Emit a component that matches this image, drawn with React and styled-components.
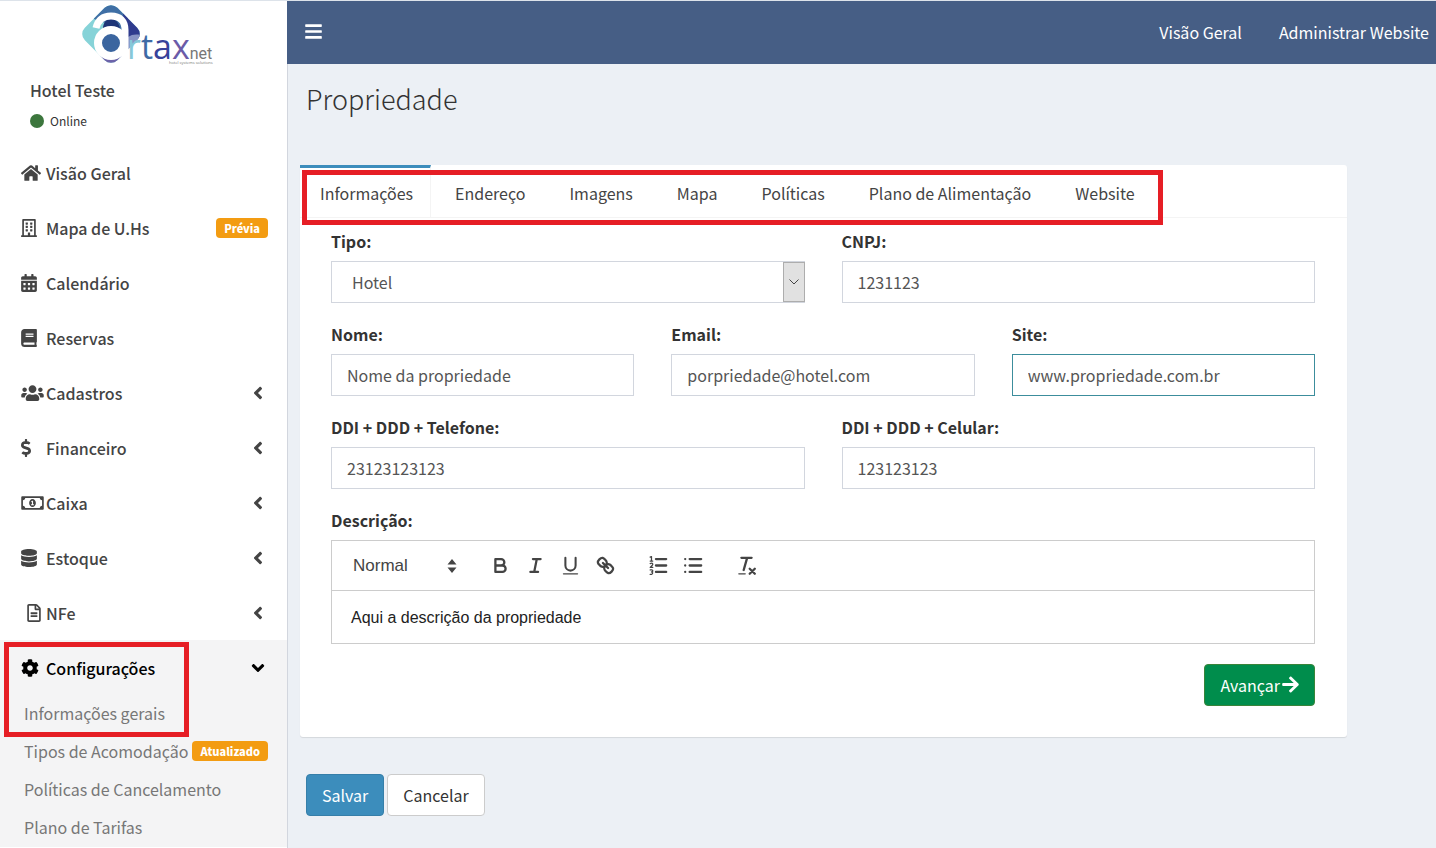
import styled, { createGlobalStyle, css } from "styled-components";
import {
  FaAngleDown,
  FaAngleLeft,
  FaArrowRight,
  FaBars,
  FaBook,
  FaCalendarAlt,
  FaCog,
  FaDatabase,
  FaDollarSign,
  FaHome,
  FaRegBuilding,
  FaRegFileAlt,
  FaRegMoneyBillAlt,
  FaUsers,
} from "react-icons/fa";

const GlobalStyle = createGlobalStyle`
  * {
    box-sizing: border-box;
  }
  body {
    margin: 0;
    background: #ecf0f5;
    color: #333;
    font-family: "Noto Sans CJK JP", "Open Sans", sans-serif;
    font-size: 16px;
    line-height: 24px;
  }
  button, input, select {
    font: inherit;
    color: inherit;
  }
  a {
    color: inherit;
    text-decoration: none;
  }
  ul {
    margin: 0;
    padding: 0;
    list-style: none;
  }
`;

const Page = styled.div`
  display: flex;
  height: 100vh;
  overflow: hidden;
  border-top: 1px solid #dde3ea;
`;

const Sidebar = styled.aside`
  flex: 0 0 287px;
  background: #fff;
  overflow: hidden;
`;

const LogoLink = styled.a`
  display: block;
  height: 64px;
  padding-left: 80px;
  svg {
    display: block;
    overflow: visible;
  }
`;

const UserPanel = styled.div`
  height: 80px;
  padding: 13px 30px;
`;

const UserName = styled.p`
  margin: 0 0 7px;
  font-weight: 500;
  color: #444;
`;

const Status = styled.a`
  display: flex;
  align-items: center;
  gap: 6px;
  font-size: 12px;
  &::before {
    content: "";
    width: 14px;
    height: 14px;
    border-radius: 50%;
    background: #3c763d;
  }
`;

const MenuItem = styled.li`
  position: relative;
  background: ${({ $active }) => ($active ? "#f4f4f5" : "transparent")};
`;

const MenuLink = styled.a`
  display: flex;
  align-items: center;
  height: 55px;
  padding: 0 19px 0 21px;
  font-weight: 500;
  color: ${({ $active }) => ($active ? "#000" : "#444")};
`;

const MenuIcon = styled.span`
  display: flex;
  flex: 0 0 25px;
  justify-content: ${({ $center }) => ($center ? "center" : "flex-start")};
  svg {
    flex: none;
    height: 18px;
    width: ${({ $width }) => $width}px;
  }
`;

const Arrow = styled.span`
  display: flex;
  justify-content: center;
  width: 20px;
  margin-left: auto;
  svg {
    width: 20px;
    height: 20px;
  }
`;

const Badge = styled.span`
  margin-left: auto;
  padding: 0 8px;
  border-radius: 4px;
  background: #f39c12;
  color: #fff;
  font-size: 11px;
  font-weight: 900;
  line-height: 20px;
`;

const SubLink = styled.a`
  display: flex;
  align-items: center;
  height: 38px;
  padding: 0 19px 2px 24px;
  color: #777;
  white-space: nowrap;
`;

const Highlight = styled.span`
  position: absolute;
  border: 5px solid #e61e25;
  pointer-events: none;
  ${({ $menu }) =>
    $menu
      ? css`
          top: 2px;
          left: 4px;
          width: 185px;
          height: 95px;
        `
      : css`
          top: 5px;
          left: 2px;
          right: -8px;
          height: 55px;
        `}
`;

const Content = styled.div`
  flex: 1;
  min-width: 0;
`;

const Topbar = styled.header`
  display: flex;
  align-items: center;
  justify-content: space-between;
  height: 63px;
  padding: 0 7px 2px 18px;
  background: #465e85;
  color: #fff;
`;

const ToggleButton = styled.button`
  display: flex;
  padding: 0;
  border: 0;
  background: none;
  color: #fff;
  svg {
    width: 17px;
    height: 19px;
  }
`;

const TopNav = styled.nav`
  display: flex;
  gap: 37px;
`;

const Main = styled.main`
  min-height: calc(100vh - 64px);
  padding: 17px 89px 32px 12px;
  border-left: 1px solid #d2d6de;
`;

const Title = styled.h1`
  margin: 0 0 48px 6px;
  font-size: 27px;
  font-weight: 300;
  line-height: 36px;
`;

const Card = styled.section`
  background: #fff;
  border-radius: 3px;
  box-shadow: 0 1px 1px rgba(0, 0, 0, 0.1);
`;

const TabBar = styled.div`
  border-bottom: 1px solid #f4f4f4;
`;

const TabList = styled.ul`
  position: relative;
  display: inline-flex;
  gap: 4px;
  vertical-align: top;
`;

const Tab = styled.li`
  height: 52px;
  padding: 13px 20px 0;
  border-top: 3px solid transparent;
  color: #444;
  ${({ $active }) =>
    $active &&
    css`
      padding-right: 17px;
      border-top-color: #3c8dbc;
      border-right: 1px solid #f4f4f4;
    `}
`;

const Form = styled.form`
  display: grid;
  gap: 20px;
  padding: 12px 32px 31px 31px;
`;

const Row = styled.div`
  display: grid;
  grid-template-columns: repeat(${({ $cols }) => $cols}, 1fr);
  gap: 37px;
`;

const Label = styled.label`
  display: block;
  margin-bottom: 9px;
  font-weight: 700;
  line-height: 22px;
`;

const fieldStyle = css`
  display: block;
  width: 100%;
  height: 42px;
  border: 1px solid #d2d6de;
  border-radius: 0;
  background: #fff;
  color: #555;
  outline: 0;
`;

const Input = styled.input`
  ${fieldStyle}
  padding: 0 15px 1px;
  border-color: ${({ $focused }) => ($focused ? "#3c8d9c" : "#d2d6de")};
`;

const SelectBox = styled.div`
  position: relative;
`;

const Select = styled.select`
  ${fieldStyle}
  appearance: none;
  padding: 0 20px;
`;

const SelectArrow = styled.span`
  position: absolute;
  top: 1px;
  right: 0;
  display: flex;
  align-items: center;
  justify-content: center;
  width: 22px;
  height: 40px;
  border: 1px solid #adadad;
  background: #e1e1e1;
  pointer-events: none;
`;

const Editor = styled.div`
  border: 1px solid #ccc;
  font-family: "Liberation Sans", sans-serif;
`;

const Toolbar = styled.div`
  display: flex;
  align-items: center;
  height: 50px;
  padding: 0 17px;
  border-bottom: 1px solid #ccc;
  color: #444;
`;

const FormatPicker = styled.button`
  display: flex;
  align-items: center;
  justify-content: space-between;
  width: 112px;
  margin-right: 22px;
  padding: 0 4px;
  border: 0;
  background: none;
  font-size: 17px;
`;

const ToolGroup = styled.div`
  display: flex;
  margin-right: 18px;
`;

const ToolButton = styled.button`
  display: flex;
  justify-content: center;
  width: 35px;
  padding: 0;
  border: 0;
  background: none;
`;

const EditorText = styled.div`
  padding: 15px 19px 13px;
  color: #222;
  outline: 0;
`;

const Button = styled.button`
  display: inline-flex;
  align-items: center;
  gap: 2px;
  height: 42px;
  padding: 0 15px 1px;
  border: 1px solid ${({ $border }) => $border};
  border-radius: 4px;
  background: ${({ $bg }) => $bg};
  color: ${({ $color }) => $color || "#fff"};
  svg {
    width: 17px;
    height: 19px;
  }
`;

const FormFooter = styled.div`
  display: flex;
  justify-content: flex-end;
`;

const Actions = styled.div`
  display: flex;
  gap: 3px;
  margin: 37px 0 0 6px;
`;

const Logo = () => (
  <svg width="138" height="64" viewBox="0 0 138 64" role="img" aria-label="Artaxnet">
    <defs>
      <clipPath id="diamond">
        <rect x="8" y="10" width="46" height="46" rx="9" transform="rotate(45 31 33)" />
      </clipPath>
    </defs>
    <g clipPath="url(#diamond)">
      <rect width="64" height="64" fill="#86d3d8" />
      <path d="M12 0h36v32L31 24 14 18z" fill="#3f6fa5" />
      <path d="M43 12l20 6v20L45 36z" fill="#2f3b8e" />
      <path d="M48 36c4-3 8-3 14-2v14H48z" fill="#8793c4" />
      <path d="M16 55l20 1 12-6v14H16z" fill="#6d63a9" />
    </g>
    <path d="M23 28c0-6 3-10 8-10s8 4 9 10c-5-2-11-2-17 0z" fill="#1d3577" />
    <path d="M16 27c2-8 7-12 15-12 9 0 14 5 14 14v29" fill="none" stroke="#fff" strokeWidth="7" />
    <circle cx="31" cy="42" r="13" fill="#3b659f" stroke="#fff" strokeWidth="8" />
    <g fontFamily="Open Sans, sans-serif">
      <text x="47" y="58" fontSize="34">
        <tspan fill="#86c8d8">r</tspan>
        <tspan fill="#3e6aa5">t</tspan>
        <tspan fill="#37429a">a</tspan>
        <tspan fill="#6b5ba8">x</tspan>
        <tspan fill="#777" fontSize="16" fontFamily="Roboto, sans-serif">
          net
        </tspan>
      </text>
      <text x="89" y="63" fontSize="4" fill="#777">
        hotel systems solutions
      </text>
    </g>
  </svg>
);

const MENU = [
  { label: "Visão Geral", icon: FaHome, width: 20 },
  { label: "Mapa de U.Hs", icon: FaRegBuilding, width: 16, badge: "Prévia" },
  { label: "Calendário", icon: FaCalendarAlt, width: 16 },
  { label: "Reservas", icon: FaBook, width: 16 },
  { label: "Cadastros", icon: FaUsers, width: 23, arrow: true },
  { label: "Financeiro", icon: FaDollarSign, width: 10, arrow: true },
  { label: "Caixa", icon: FaRegMoneyBillAlt, width: 23, arrow: true },
  { label: "Estoque", icon: FaDatabase, width: 16, arrow: true },
  { label: "NFe", icon: FaRegFileAlt, width: 14, arrow: true, center: true },
];

const SUBMENU = [
  { label: "Informações gerais" },
  { label: "Tipos de Acomodação", badge: "Atualizado" },
  { label: "Políticas de Cancelamento" },
  { label: "Plano de Tarifas" },
];

const TABS = [
  "Informações",
  "Endereço",
  "Imagens",
  "Mapa",
  "Políticas",
  "Plano de Alimentação",
  "Website",
];

const Field = ({ id, label, value, focused }) => (
  <div>
    <Label htmlFor={id}>{label}</Label>
    <Input id={id} defaultValue={value} $focused={focused} />
  </div>
);

// toolbar glyphs share the 18x18 grid
const Glyph = ({ children }) => (
  <svg
    width="23"
    height="23"
    viewBox="0 0 18 18"
    fill="none"
    stroke="#444"
    strokeWidth="1.8"
    strokeLinecap="round"
    strokeLinejoin="round"
  >
    {children}
  </svg>
);

const BoldGlyph = () => (
  <Glyph>
    <path d="M5 4h4.5a2.5 2.5 0 0 1 0 5H5zM5 9h5.5a2.5 2.5 0 0 1 0 5H5z" />
  </Glyph>
);

const ItalicGlyph = () => (
  <Glyph>
    <path d="M7 4h6M5 14h6M8 14l2-10" />
  </Glyph>
);

const UnderlineGlyph = () => (
  <Glyph>
    <path d="M5 3v6a4 4 0 0 0 8 0V3" strokeWidth="1.6" />
    <path d="M3.5 15.5h11" strokeWidth="1" />
  </Glyph>
);

const LinkGlyph = () => (
  <Glyph>
    <path d="M7 7l4 4" />
    <path d="M8.9 4.577a3.476 3.476 0 0 1 .36 4.679A3.476 3.476 0 0 1 4.577 8.9C3.185 7.5 2.035 6.4 4.217 4.217S7.5 3.185 8.9 4.577z" />
    <path d="M13.423 9.1a3.476 3.476 0 0 0-4.679-.36 3.476 3.476 0 0 0 .36 4.679c1.392 1.392 2.5 2.542 4.679.36s1.032-3.279-.36-4.679z" />
  </Glyph>
);

const OrderedGlyph = () => (
  <Glyph>
    <path d="M7 4h8M7 9h8M7 14h8" />
    <path
      d="M2.5 2.5l1-.5v3.5M2.5 5.5h2M2.5 7.5c2-1 2.500.5 1.500 1.500L2.500 10.500h2M2.500 12.500h1.500c1 .5.5 1.500-.5 1.500 1 0 1.500 1.500 0 2h-1"
      strokeWidth="1"
    />
  </Glyph>
);

const BulletGlyph = () => (
  <Glyph>
    <path d="M6 4h9M6 9h9M6 14h9M2.5 4h.01M2.5 9h.01M2.5 14h.01" />
  </Glyph>
);

const CleanGlyph = () => (
  <Glyph>
    <path d="M5 3h8M6.8 12.5L9.500 3" strokeWidth="1.8" />
    <path d="M3 15.5h5" strokeWidth="1" />
    <path d="M11.5 11.5l4 4M15.500 11.500l-4 4" />
  </Glyph>
);

const TOOLS = [
  [
    { name: "Negrito", icon: BoldGlyph },
    { name: "Itálico", icon: ItalicGlyph },
    { name: "Sublinhado", icon: UnderlineGlyph },
    { name: "Link", icon: LinkGlyph },
  ],
  [
    { name: "Lista numerada", icon: OrderedGlyph },
    { name: "Lista", icon: BulletGlyph },
  ],
  [{ name: "Limpar formatação", icon: CleanGlyph }],
];

const App = () => {
  return (
    <>
      <GlobalStyle />
      <Page>
        <Sidebar>
          <LogoLink href="#">
            <Logo />
          </LogoLink>
          <UserPanel>
            <UserName>Hotel Teste</UserName>
            <Status href="#">Online</Status>
          </UserPanel>
          <ul>
            {MENU.map(({ label, icon: Icon, width, badge, arrow, center }) => (
              <MenuItem key={label}>
                <MenuLink href="#">
                  <MenuIcon $width={width} $center={center}>
                    <Icon preserveAspectRatio="xMidYMid meet" />
                  </MenuIcon>
                  {label}
                  {badge && <Badge>{badge}</Badge>}
                  {arrow && (
                    <Arrow>
                      <FaAngleLeft />
                    </Arrow>
                  )}
                </MenuLink>
              </MenuItem>
            ))}
            <MenuItem $active>
              <MenuLink href="#" $active>
                <MenuIcon $width={18}>
                  <FaCog />
                </MenuIcon>
                Configurações
                <Arrow>
                  <FaAngleDown />
                </Arrow>
              </MenuLink>
              <ul>
                {SUBMENU.map(({ label, badge }) => (
                  <li key={label}>
                    <SubLink href="#">
                      {label}
                      {badge && <Badge>{badge}</Badge>}
                    </SubLink>
                  </li>
                ))}
              </ul>
              <Highlight $menu />
            </MenuItem>
          </ul>
        </Sidebar>

        <Content>
          <Topbar>
            <ToggleButton aria-label="Menu">
              <FaBars />
            </ToggleButton>
            <TopNav>
              <a href="#">Visão Geral</a>
              <a href="#">Administrar Website</a>
            </TopNav>
          </Topbar>

          <Main>
            <Title>Propriedade</Title>
            <Card>
              <TabBar>
                <TabList>
                  {TABS.map((tab, i) => (
                    <Tab key={tab} $active={i === 0}>
                      <a href="#">{tab}</a>
                    </Tab>
                  ))}
                  <Highlight as="li" />
                </TabList>
              </TabBar>

              <Form>
                <Row $cols={2}>
                  <div>
                    <Label htmlFor="tipo">Tipo:</Label>
                    <SelectBox>
                      <Select id="tipo">
                        <option>Hotel</option>
                      </Select>
                      <SelectArrow>
                        <svg width="10" height="6" viewBox="0 0 10 6" fill="none" stroke="#444">
                          <path d="M.5.5L5 5 9.500.5" />
                        </svg>
                      </SelectArrow>
                    </SelectBox>
                  </div>
                  <Field id="cnpj" label="CNPJ:" value="1231123" />
                </Row>
                <Row $cols={3}>
                  <Field id="nome" label="Nome:" value="Nome da propriedade" />
                  <Field id="email" label="Email:" value="porpriedade@hotel.com" />
                  <Field id="site" label="Site:" value="www.propriedade.com.br" focused />
                </Row>
                <Row $cols={2}>
                  <Field id="telefone" label="DDI + DDD + Telefone:" value="23123123123" />
                  <Field id="celular" label="DDI + DDD + Celular:" value="123123123" />
                </Row>
                <div>
                  <Label as="div" id="descricao">
                    Descrição:
                  </Label>
                  <Editor>
                    <Toolbar>
                      <FormatPicker type="button">
                        Normal
                        <svg width="10" height="14" viewBox="0 0 10 14" fill="#444">
                          <path d="M5 0l4.500 5.500h-9zM5 14L.5 8.500h9z" />
                        </svg>
                      </FormatPicker>
                      {TOOLS.map((group, i) => (
                        <ToolGroup key={i}>
                          {group.map(({ name, icon: Icon }) => (
                            <ToolButton type="button" key={name} aria-label={name}>
                              <Icon />
                            </ToolButton>
                          ))}
                        </ToolGroup>
                      ))}
                    </Toolbar>
                    <EditorText
                      contentEditable
                      suppressContentEditableWarning
                      role="textbox"
                      aria-labelledby="descricao"
                    >
                      Aqui a descrição da propriedade
                    </EditorText>
                  </Editor>
                </div>
                <FormFooter>
                  <Button type="button" $bg="#008d4c" $border="#398439">
                    Avançar
                    <FaArrowRight />
                  </Button>
                </FormFooter>
              </Form>
            </Card>

            <Actions>
              <Button $bg="#3c8dbc" $border="#367fa9">
                Salvar
              </Button>
              <Button $bg="#fff" $border="#ccc" $color="#333">
                Cancelar
              </Button>
            </Actions>
          </Main>
        </Content>
      </Page>
    </>
  );
};

export default App;
